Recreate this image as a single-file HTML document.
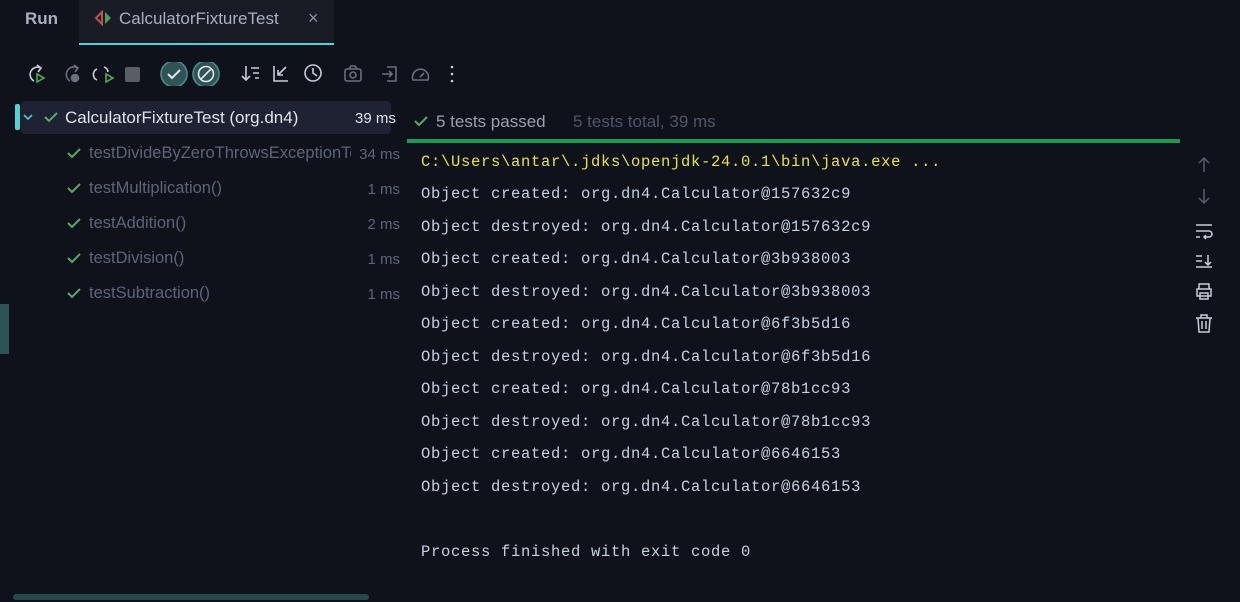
<!DOCTYPE html>
<html><head><meta charset="utf-8"><style>
*{margin:0;padding:0;box-sizing:border-box}
body{width:1240px;height:602px;background:#0f121a;overflow:hidden;position:relative;font-family:"Liberation Sans",sans-serif;color:#c8ccd6}
.a{position:absolute}
.tab{left:79px;top:0;width:255px;height:45px;background:#191c25;border-bottom:2px solid #4fd2d8}
.t{font-size:17px;white-space:nowrap}
.mono{font-family:"Liberation Mono",monospace;font-size:15.5px;letter-spacing:0.7px;color:#c8d0e0;white-space:pre;left:421px}
.row{font-size:16.5px;color:#5d6479;white-space:nowrap}
.ms{font-size:15px;color:#5d6479;right:840px;text-align:right;white-space:nowrap}
svg{position:absolute}
</style></head><body>
<div class="a t" style="left:25px;top:9px;color:#aab0bf;font-weight:bold;font-size:17px">Run</div>
<div class="a tab"></div>
<svg style="left:94px;top:10px" width="20" height="16" viewBox="0 0 20 16"><path d="M8 2 L2 8 L8 14Z" fill="none" stroke="#c0504d" stroke-width="2"/><path d="M11 2 L17 8 L11 14Z" fill="#4e9a5a"/></svg>
<div class="a t" style="left:119px;top:9px;color:#aab0bf">CalculatorFixtureTest</div>
<div class="a t" style="left:308px;top:8px;color:#8a90a0;font-size:18px">×</div>

<!-- toolbar -->
<svg style="left:24px;top:62px" width="440" height="24" viewBox="0 0 440 24" fill="none" stroke="#c8ccd6" stroke-width="1.6">
<path d="M17 6 A7 7 0 1 0 10 19"/><path d="M13 3 L17 6 L14 10"/><path d="M13 12 L20 16 L13 20Z" stroke="#4ea85a" fill="none"/>
<g stroke="#6a6f7c"><path d="M54 6 A7 7 0 1 0 46 19"/><path d="M50 3 L54 6 L51 10"/><circle cx="51" cy="16" r="3.5" fill="#6a6f7c"/></g>
<path d="M73 7 A6 6 0 0 0 73 18"/><path d="M80 5 A6 6 0 0 1 84 10"/><path d="M82 12 L89 16 L82 20Z" stroke="#4ea85a"/>
<rect x="101" y="5" width="15" height="15" rx="2" fill="#5a5d66" stroke="none"/>
<circle cx="150" cy="12" r="13" fill="#2f5456" stroke="#4d8a8c"/><path d="M144 12 L148 16 L156 8" stroke="#e6e8ec" stroke-width="2"/>
<circle cx="182" cy="12" r="13" fill="#2f5456" stroke="#4d8a8c"/><circle cx="182" cy="12" r="7.5" stroke="#e6e8ec"/><path d="M177 17 L187 7" stroke="#e6e8ec"/>
<path d="M222 4 V18 M218 14 L222 18 L226 14 M227 6 H235 M229 11 H235 M231 16 H235"/>
<path d="M250 4 V19 H264 M262 5 L254 13 M254 8 V13 H259"/>
<circle cx="289" cy="11" r="8"/><path d="M289 6 V11 L293 14"/>
<g stroke="#6a6f7c"><rect x="321" y="7" width="16" height="12" rx="2"/><circle cx="329" cy="13" r="3"/><path d="M325 7 L327 4 H331 L333 7"/>
<path d="M358 12 H368 M365 9 L368 12 L365 15 M363 5 H372 V19 H363"/>
<path d="M389 18 A8 8 0 1 1 404 18 Z M396 15 L400 11"/></g>
<circle cx="428" cy="5" r="1.3" fill="#c8ccd6" stroke="none"/><circle cx="428" cy="12" r="1.3" fill="#c8ccd6" stroke="none"/><circle cx="428" cy="19" r="1.3" fill="#c8ccd6" stroke="none"/>
</svg>

<!-- tree -->
<div class="a" style="left:21px;top:101px;width:370px;height:33px;background:#1e2233;border-radius:4px"></div>
<div class="a" style="left:15px;top:104px;width:5px;height:26px;background:#4fd2d8;border-radius:2px"></div>
<svg style="left:22px;top:112px" width="12" height="10"><path d="M2 3 L6 7 L10 3" stroke="#5fc3d0" stroke-width="1.6" fill="none"/></svg>
<svg style="left:43px;top:110px" width="16" height="14"><path d="M2 7 L6 11 L14 3" stroke="#59a869" stroke-width="2" fill="none"/></svg>
<div class="a t" style="left:65px;top:108px;color:#e0e3ea;font-size:17px">CalculatorFixtureTest (org.dn4)</div>
<div class="a" style="left:355px;top:110px;font-size:15px;color:#e0e3ea">39 ms</div>

<svg style="left:66px;top:146px" width="16" height="180" stroke="#59a869" stroke-width="2" fill="none">
<path d="M2 7 L6 11 L14 3"/><path d="M2 42 L6 46 L14 38"/><path d="M2 77 L6 81 L14 73"/><path d="M2 112 L6 116 L14 108"/><path d="M2 147 L6 151 L14 143"/></svg>
<div class="a row" style="left:89px;top:144px;width:262px;overflow:hidden">testDivideByZeroThrowsExceptionTest</div>
<div class="a row" style="left:89px;top:179px">testMultiplication()</div>
<div class="a row" style="left:89px;top:214px">testAddition()</div>
<div class="a row" style="left:89px;top:249px">testDivision()</div>
<div class="a row" style="left:89px;top:284px">testSubtraction()</div>
<div class="a ms" style="top:146px">34 ms</div>
<div class="a ms" style="top:181px">1 ms</div>
<div class="a ms" style="top:216px">2 ms</div>
<div class="a ms" style="top:251px">1 ms</div>
<div class="a ms" style="top:286px">1 ms</div>
<div class="a" style="left:0;top:304px;width:9px;height:50px;background:#2e5356"></div>
<div class="a" style="left:13px;top:594px;width:356px;height:6px;background:#26474b;border-radius:3px"></div>

<!-- status -->
<svg style="left:413px;top:114px" width="16" height="14"><path d="M2 7 L6 11 L14 3" stroke="#59a869" stroke-width="2" fill="none"/></svg>
<div class="a t" style="left:436px;top:112px;color:#9aa0ae;font-size:17px">5 tests passed</div>
<div class="a t" style="left:573px;top:112px;color:#4f5668;font-size:17px">5 tests total, 39 ms</div>
<div class="a" style="left:407px;top:139px;width:773px;height:4px;background:#1a9a55"></div>

<div class="a mono" style="top:153px;color:#e6e24a">C:\Users\antar\.jdks\openjdk-24.0.1\bin\java.exe ...</div>
<div class="a mono" style="top:185px">Object created: org.dn4.Calculator@157632c9</div>
<div class="a mono" style="top:218px">Object destroyed: org.dn4.Calculator@157632c9</div>
<div class="a mono" style="top:250px">Object created: org.dn4.Calculator@3b938003</div>
<div class="a mono" style="top:283px">Object destroyed: org.dn4.Calculator@3b938003</div>
<div class="a mono" style="top:315px">Object created: org.dn4.Calculator@6f3b5d16</div>
<div class="a mono" style="top:348px">Object destroyed: org.dn4.Calculator@6f3b5d16</div>
<div class="a mono" style="top:380px">Object created: org.dn4.Calculator@78b1cc93</div>
<div class="a mono" style="top:413px">Object destroyed: org.dn4.Calculator@78b1cc93</div>
<div class="a mono" style="top:445px">Object created: org.dn4.Calculator@6646153</div>
<div class="a mono" style="top:478px">Object destroyed: org.dn4.Calculator@6646153</div>
<div class="a mono" style="top:543px">Process finished with exit code 0</div>

<!-- right icons -->
<svg style="left:1194px;top:155px" width="22" height="180" fill="none" stroke-width="1.5">
<g stroke="#5a5e6a"><path d="M10 3 V17 M5 8 L10 3 L15 8"/><path d="M10 34 V48 M5 43 L10 48 L15 43"/></g>
<g stroke="#c8ccd6"><path d="M2 70 H18 M2 76 H15 A3 3 0 0 1 15 82 H10 M12 80 L10 82 L12 84 M2 82 H6"/>
<path d="M2 101 H8 M2 106 H8 M2 112 H18 M14 100 V110 M11 107 L14 110 L17 107"/>
<path d="M5 134 V129 H15 V134 M3 134 H17 V141 H3Z M6 138 H14 V144 H6Z"/>
<path d="M2 163 H18 M7 163 V160 H13 V163 M4 163 L5 177 H15 L16 163 M8 166 V174 M12 166 V174"/></g>
</svg>
</body></html>
